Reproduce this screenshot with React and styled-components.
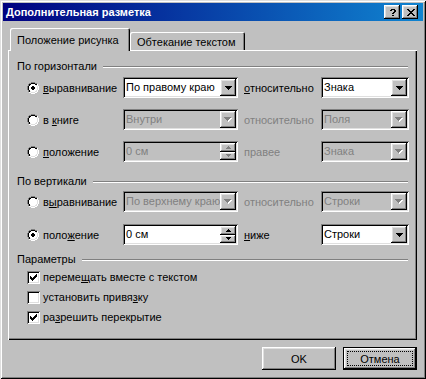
import styled, { createGlobalStyle, css } from 'styled-components';

const GlobalStyle = createGlobalStyle`
  html, body {
    margin: 0;
    padding: 0;
    background: #c0c0c0;
  }
  body {
    font-family: "Liberation Sans", Arial, sans-serif;
    font-size: 11px;
    color: #000;
  }
`;

const raisedBevel = css`
  box-shadow: inset -1px -1px #000, inset 1px 1px #fff, inset -2px -2px #808080, inset 2px 2px #dfdfdf;
`;

const sunkenBevel = css`
  box-shadow: inset 1px 1px #808080, inset -1px -1px #fff, inset 2px 2px #000, inset -2px -2px #dfdfdf;
`;

const Window = styled.div`
  box-sizing: border-box;
  width: 426px;
  height: 379px;
  padding: 3px;
  background: #c0c0c0;
  box-shadow: inset 1px 1px #dfdfdf, inset -1px -1px #000, inset 2px 2px #fff, inset -2px -2px #808080;
`;

const TitleBar = styled.div`
  height: 18px;
  display: flex;
  align-items: center;
  padding: 0 5px 0 3px;
  background: linear-gradient(to right, #000080, #1084d0);
`;

const Title = styled.span`
  flex: 1;
  color: #fff;
  font-weight: bold;
  font-size: 11px;
  white-space: nowrap;
`;

const CaptionButtons = styled.div`
  display: flex;
  gap: 2px;
`;

const CaptionButton = styled.div`
  box-sizing: border-box;
  width: 16px;
  height: 14px;
  background: #c0c0c0;
  display: flex;
  align-items: center;
  justify-content: center;
  padding-left: 1px;
  ${raisedBevel}
`;

const Body = styled.div`
  padding: 7px 6px 0 5px;
`;

const TabStrip = styled.div`
  display: flex;
  align-items: flex-end;
  height: 22px;
  padding-left: 2px;
`;

const Tab = styled.div`
  box-sizing: border-box;
  position: relative;
  width: ${p => (p.$active ? 120 : 115)}px;
  height: ${p => (p.$active ? 23 : 18)}px;
  margin-bottom: ${p => (p.$active ? -1 : 0)}px;
  z-index: ${p => (p.$active ? 1 : 0)};
  padding: ${p => (p.$active ? 6 : 4)}px 0 0 7px;
  line-height: 13px;
  background: #c0c0c0;
  border-radius: 2px 2px 0 0;
  white-space: nowrap;
  box-shadow: inset 1px 1px #fff, inset -1px 0 #000, inset -2px 0 #808080;
`;

const Panel = styled.div`
  box-sizing: border-box;
  width: 409px;
  height: 290px;
  padding: 10px 8px 0 9px;
  display: flex;
  flex-direction: column;
  box-shadow: inset 1px 1px #fff, inset -1px -1px #000, inset -2px -2px #808080;
`;

const GroupHeading = styled.div`
  display: flex;
  align-items: center;
  gap: 6px;
  height: 13px;
  line-height: 13px;
  margin: ${p => p.$top || 0}px 1px 0 0;
  white-space: nowrap;

  &::after {
    content: '';
    flex: 1;
    height: 0;
    border-top: 1px solid #808080;
    border-bottom: 1px solid #fff;
  }
`;

const OptionRow = styled.div`
  display: grid;
  grid-template-columns: 96px 115px 83px 88px;
  align-items: center;
  height: 21px;
  margin: ${p => p.$top}px 0 0 10px;
`;

const RadioOption = styled.div`
  display: flex;
  align-items: center;
  gap: 4px;
  white-space: nowrap;
`;

const SideLabel = styled.span`
  padding-left: 6px;
  white-space: nowrap;
  color: ${p => (p.$disabled ? '#808080' : '#000')};
`;

const Key = styled.span`
  text-decoration: underline;
`;

const Field = styled.div`
  box-sizing: border-box;
  height: 21px;
  display: flex;
  padding: 2px;
  background: ${p => (p.$disabled ? '#c0c0c0' : '#fff')};
  ${sunkenBevel}
`;

const FieldText = styled.span`
  flex: 1;
  min-width: 0;
  overflow: hidden;
  white-space: nowrap;
  padding-left: 1px;
  line-height: 17px;
  color: ${p => (p.$disabled ? '#808080' : '#000')};
`;

const DropButton = styled.div`
  box-sizing: border-box;
  width: 16px;
  background: #c0c0c0;
  display: flex;
  align-items: center;
  justify-content: center;
  ${raisedBevel}
`;

const SpinColumn = styled.div`
  width: 16px;
  display: flex;
  flex-direction: column;
`;

const SpinButton = styled.div`
  box-sizing: border-box;
  flex: 1;
  background: #c0c0c0;
  display: flex;
  align-items: center;
  justify-content: center;
  ${raisedBevel}
`;

const CheckRow = styled.div`
  display: flex;
  align-items: center;
  gap: 3px;
  height: 20px;
  margin-left: 10px;
  white-space: nowrap;
  margin-top: ${p => p.$top || 0}px;
`;

const ButtonRow = styled.div`
  display: flex;
  justify-content: flex-end;
  gap: 7px;
  margin-top: 7px;
`;

const PushButton = styled.div`
  box-sizing: border-box;
  width: 74px;
  height: 23px;
  display: flex;
  align-items: stretch;
  background: #c0c0c0;
  border: ${p => (p.$default ? '1px solid #000' : 'none')};
  padding: ${p => (p.$default ? 3 : 4)}px;
  ${raisedBevel}
`;

const ButtonFace = styled.span`
  flex: 1;
  display: flex;
  align-items: center;
  justify-content: center;
  border: 1px dotted ${p => (p.$focus ? '#000' : 'transparent')};
`;

const CheckBox = styled.div`
  box-sizing: border-box;
  width: 13px;
  height: 13px;
  padding: 3px;
  background: #fff;
  line-height: 0;
  ${sunkenBevel}
`;

// little bitmap glyphs, one string per pixel row
const Pixels = ({ rows, color = '#000', shadow }) => {
  const cells = [];
  rows.forEach((r, y) => [...r].forEach((c, x) => c === '#' && cells.push([x, y])));
  const extra = shadow ? 1 : 0;
  return (
    <svg width={rows[0].length + extra} height={rows.length + extra} shapeRendering="crispEdges">
      {shadow && cells.map(([x, y]) => <rect key={`s${x}-${y}`} x={x + 1} y={y + 1} width="1" height="1" fill={shadow} />)}
      {cells.map(([x, y]) => <rect key={`${x}-${y}`} x={x} y={y} width="1" height="1" fill={color} />)}
    </svg>
  );
};

const HELP = ['.####.', '##..##', '....##', '...##.', '..##..', '......', '..##..'];
const CLOSE = ['##....##', '.##..##.', '..####..', '...##...', '..####..', '.##..##.', '##....##'];
const DOWN = ['#######', '.#####.', '..###..', '...#...'];
const SPIN_UP = ['..#..', '.###.', '#####'];
const SPIN_DOWN = ['#####', '.###.', '..#..'];
const CHECK = ['......#', '.....##', '#...###', '##.###.', '#####..', '.###...', '..#....'];

const Radio = ({ checked }) => {
  const cells = [];
  for (let y = 0; y < 12; y++) {
    for (let x = 0; x < 12; x++) {
      const d = Math.hypot(x + 0.5 - 6, y + 0.5 - 6);
      const topLeft = x + y <= 11;
      let fill = null;
      if (d < 2 && checked) fill = '#000';
      else if (d < 4) fill = '#fff';
      else if (d < 5) fill = topLeft ? '#000' : '#dfdfdf';
      else if (d < 6) fill = topLeft ? '#808080' : '#fff';
      if (fill) cells.push(<rect key={`${x}-${y}`} x={x} y={y} width="1" height="1" fill={fill} />);
    }
  }
  return (
    <svg width="12" height="12" shapeRendering="crispEdges">
      {cells}
    </svg>
  );
};

const Combo = ({ value, disabled }) => (
  <Field $disabled={disabled}>
    <FieldText $disabled={disabled}>{value}</FieldText>
    <DropButton>
      <Pixels rows={DOWN} color={disabled ? '#808080' : '#000'} shadow={disabled ? '#fff' : null} />
    </DropButton>
  </Field>
);

const Spin = ({ value, disabled }) => (
  <Field $disabled={disabled}>
    <FieldText $disabled={disabled}>{value}</FieldText>
    <SpinColumn>
      <SpinButton>
        <Pixels rows={SPIN_UP} color={disabled ? '#808080' : '#000'} />
      </SpinButton>
      <SpinButton>
        <Pixels rows={SPIN_DOWN} color={disabled ? '#808080' : '#000'} />
      </SpinButton>
    </SpinColumn>
  </Field>
);

const Check = ({ checked, children, top }) => (
  <CheckRow $top={top}>
    <CheckBox>{checked && <Pixels rows={CHECK} />}</CheckBox>
    <span>{children}</span>
  </CheckRow>
);

export default function App() {
  return (
    <>
      <GlobalStyle />
      <Window>
        <TitleBar>
          <Title>Дополнительная разметка</Title>
          <CaptionButtons>
            <CaptionButton>
              <Pixels rows={HELP} />
            </CaptionButton>
            <CaptionButton>
              <Pixels rows={CLOSE} />
            </CaptionButton>
          </CaptionButtons>
        </TitleBar>
        <Body>
          <TabStrip>
            <Tab $active>Положение рисунка</Tab>
            <Tab>Обтекание текстом</Tab>
          </TabStrip>
          <Panel>
            <GroupHeading>По горизонтали</GroupHeading>
            <OptionRow $top={4}>
              <RadioOption>
                <Radio checked />
                <span><Key>в</Key>ыравнивание</span>
              </RadioOption>
              <Combo value="По правому краю" />
              <SideLabel><Key>о</Key>тносительно</SideLabel>
              <Combo value="Знака" />
            </OptionRow>
            <OptionRow $top={11}>
              <RadioOption>
                <Radio />
                <span>в <Key>к</Key>ниге</span>
              </RadioOption>
              <Combo value="Внутри" disabled />
              <SideLabel $disabled>относительно</SideLabel>
              <Combo value="Поля" disabled />
            </OptionRow>
            <OptionRow $top={11}>
              <RadioOption>
                <Radio />
                <span><Key>п</Key>оложение</span>
              </RadioOption>
              <Spin value="0 см" disabled />
              <SideLabel $disabled>правее</SideLabel>
              <Combo value="Знака" disabled />
            </OptionRow>

            <GroupHeading $top={13}>По вертикали</GroupHeading>
            <OptionRow $top={3}>
              <RadioOption>
                <Radio />
                <span>в<Key>ы</Key>равнивание</span>
              </RadioOption>
              <Combo value="По верхнему краю" disabled />
              <SideLabel $disabled>относительно</SideLabel>
              <Combo value="Строки" disabled />
            </OptionRow>
            <OptionRow $top={12}>
              <RadioOption>
                <Radio checked />
                <span>поло<Key>ж</Key>ение</span>
              </RadioOption>
              <Spin value="0 см" />
              <SideLabel><Key>н</Key>иже</SideLabel>
              <Combo value="Строки" />
            </OptionRow>

            <GroupHeading $top={8}>Параметры</GroupHeading>
            <Check checked top={1}>переме<Key>щ</Key>ать вместе с текстом</Check>
            <Check>установить привя<Key>з</Key>ку</Check>
            <Check checked>ра<Key>з</Key>решить перекрытие</Check>
          </Panel>
          <ButtonRow>
            <PushButton>
              <ButtonFace>OK</ButtonFace>
            </PushButton>
            <PushButton $default>
              <ButtonFace $focus>Отмена</ButtonFace>
            </PushButton>
          </ButtonRow>
        </Body>
      </Window>
    </>
  );
}
